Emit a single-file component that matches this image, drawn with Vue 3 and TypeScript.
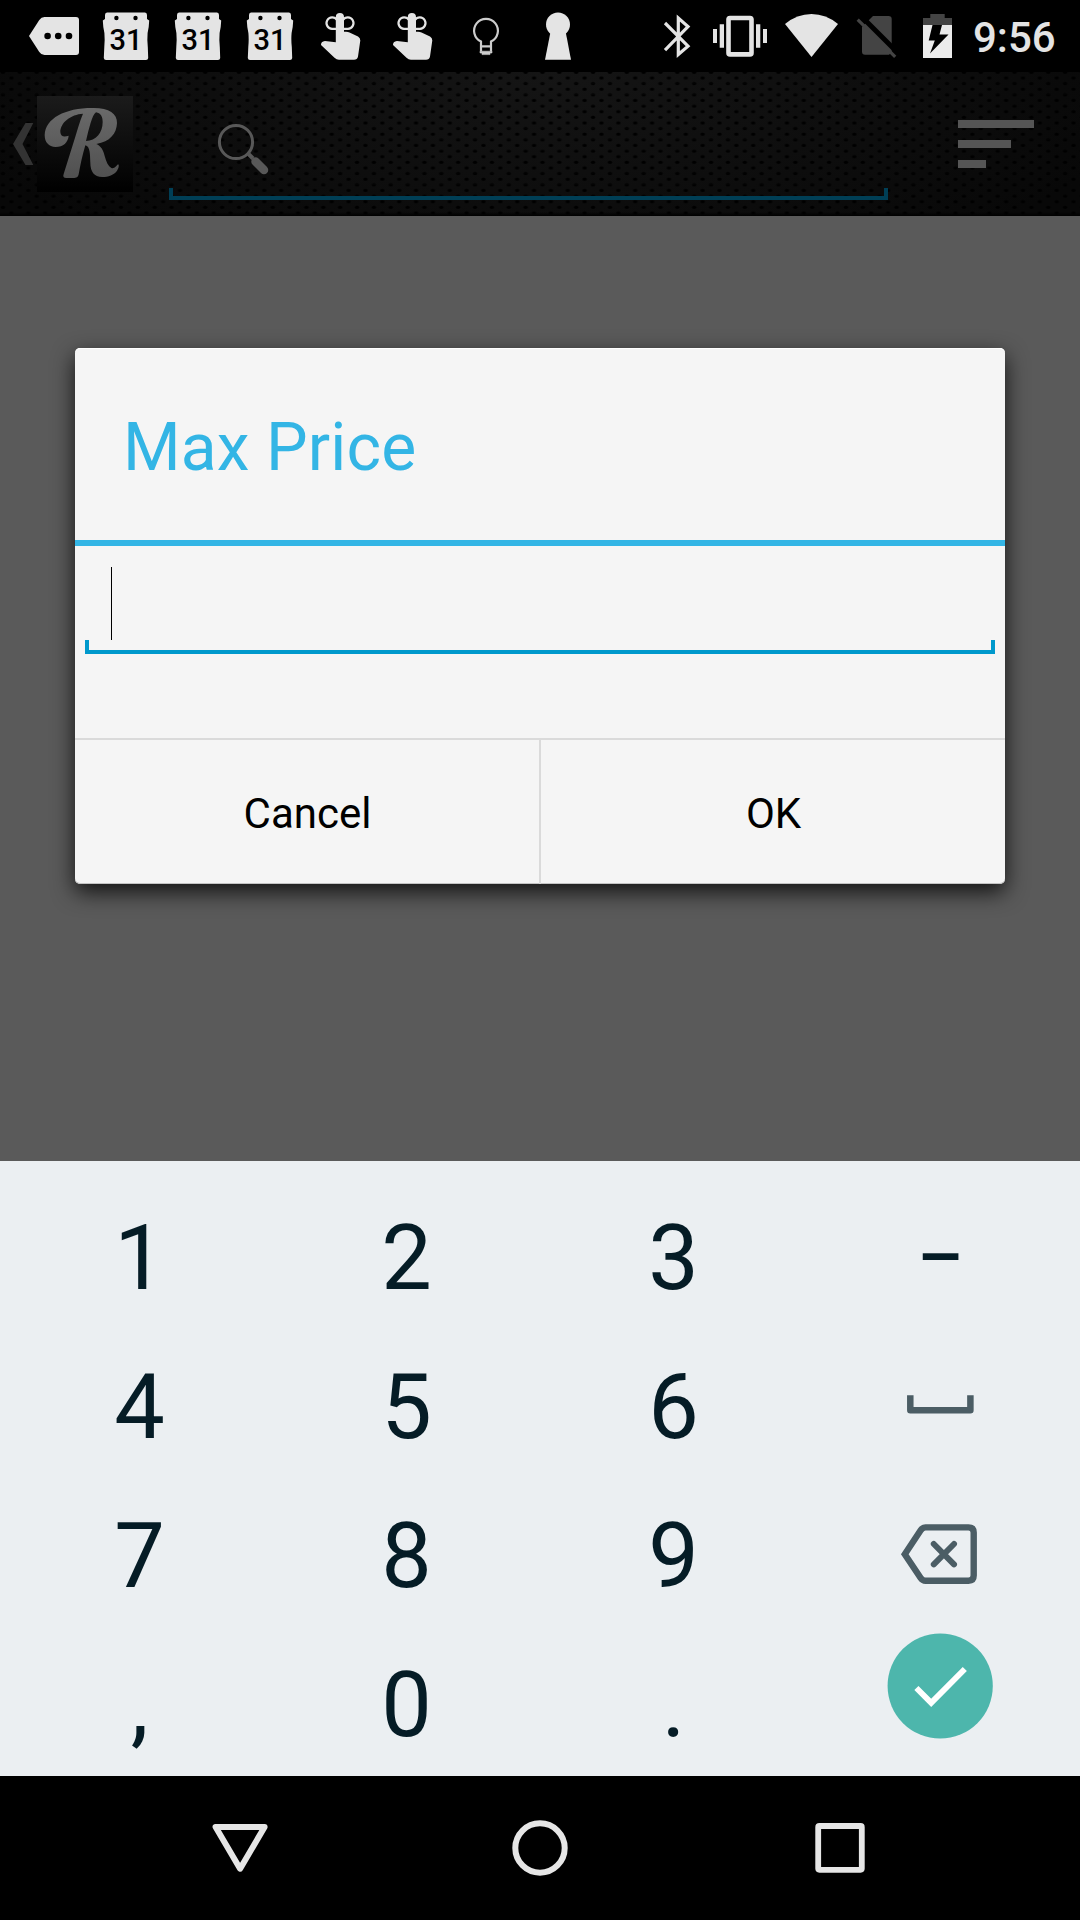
<script setup lang="ts">
interface Key {
  id: string
  label?: string
}

const keys: Key[] = [
  { id: '1', label: '1' },
  { id: '2', label: '2' },
  { id: '3', label: '3' },
  { id: 'minus', label: '–' },
  { id: '4', label: '4' },
  { id: '5', label: '5' },
  { id: '6', label: '6' },
  { id: 'space' },
  { id: '7', label: '7' },
  { id: '8', label: '8' },
  { id: '9', label: '9' },
  { id: 'delete' },
  { id: 'comma', label: ',' },
  { id: '0', label: '0' },
  { id: 'dot', label: '.' },
  { id: 'done' },
]

const calendars: number[] = [1, 2, 3]
const reminders: number[] = [1, 2]
</script>

<template>
  <div class="screen">
    <header class="status">
      <div class="notifications">
        <svg width="72" height="72" viewBox="18 0 72 72" fill="#e4e4e4">
          <path d="M29 36 39.3 20Q41.3 17 44.5 17H76Q79 17 79 20V52Q79 55 76 55H44.5Q41.3 55 39.3 52Z" />
          <g fill="#000">
            <circle cx="47.6" cy="36" r="3.3" />
            <circle cx="58.2" cy="36" r="3.3" />
            <circle cx="69" cy="36" r="3.3" />
          </g>
        </svg>
        <svg v-for="n in calendars" :key="'c' + n" width="72" height="72" viewBox="90 0 72 72" fill="#e4e4e4">
          <path d="M107 12.5H145Q147 12.5 147 15V19L149.2 20.5Q149 27 147.6 33Q147 40 147.8 47L148.2 58Q148 60 146 60H106Q104 60 103.8 58L104.3 47Q105 40 104.4 33Q103 27 102.8 20.5L105 19V15Q105 12.5 107 12.5Z" />
          <circle cx="116.4" cy="18" r="2.2" fill="#000" />
          <circle cx="135.5" cy="18" r="2.2" fill="#000" />
          <text x="126" y="50.3" text-anchor="middle" class="date">31</text>
        </svg>
        <svg v-for="n in reminders" :key="'r' + n" width="72" height="72" viewBox="306 0 72 72" fill="#e4e4e4">
          <path d="M335.8 17A4.1 4.1 0 0 1 344 17V31.7H346Q348 31.8 349.5 32.4L358 36.5Q360.4 38 360.3 40.5L358 56.5Q357.3 59.7 354 59.7H339Q336.5 59.7 334.5 57.8L321 45Q320.8 41.5 325 40.9L335.8 42.3Z" />
          <path d="M336 28.8H332A5.7 5.7 0 1 1 337 20M343.7 28.8H348A5.7 5.7 0 1 0 343 20" fill="none" stroke="#e4e4e4" stroke-width="2.2" />
        </svg>
        <svg width="72" height="72" viewBox="450 0 72 72" fill="none" stroke="#ccc" stroke-width="2.2">
          <path d="M481 51.5V41.5A11.9 11.9 0 1 1 491 41.5V51.5M480 46.3H492" />
          <path d="M480 51.2H492V53H490V54.6H482V53H480Z" fill="#ccc" stroke-width="0.6" />
        </svg>
        <svg width="72" height="72" viewBox="522 0 72 72" fill="#e4e4e4">
          <circle cx="558" cy="24.4" r="12" />
          <path d="M550.5 32H565.7L571 59.7H545Z" />
        </svg>
      </div>
      <div class="system">
        <svg width="60" height="72" viewBox="648 0 60 72" fill="none" stroke="#e4e4e4" stroke-width="3.2">
          <path d="M665 23 688 46.2 678.3 54.5V18L688 26.5 665 50.2" />
        </svg>
        <svg width="68" height="72" viewBox="708 0 68 72" fill="#e4e4e4">
          <rect x="728.5" y="18" width="23" height="36.4" rx="1.5" fill="none" stroke="#e4e4e4" stroke-width="4.6" />
          <path d="M713 29H717V43H713ZM719.7 24.3H724V47.7H719.7ZM756 24.3H760.3V47.7H756ZM763 29H767V43H763Z" />
        </svg>
        <svg width="72" height="72" viewBox="776 0 72 72" fill="#e4e4e4">
          <path d="M811.5 57 785 24Q797 14 811.5 14T838 24Z" />
        </svg>
        <svg width="60" height="72" viewBox="848 0 60 72">
          <path d="M873 16H888.5Q891.7 16 891.7 19V52L889 54.7H865Q862 54.7 862 51.7V27Z" fill="#444" />
          <path d="M860 15 900 55" stroke="#000" stroke-width="5" />
          <path d="M857.7 19.7 895.2 56.8" stroke="#444" stroke-width="3.2" />
        </svg>
        <svg width="65" height="72" viewBox="908 0 65 72">
          <path d="M930.3 14H944.7V18H952V26H923V18H930.3Z" fill="#444" />
          <path d="M923 25H952V58H923Z" fill="#ebebeb" />
          <path d="M932.5 25H942L939.5 34.6H948.5L930 53.5 934.8 40.5H928.7Z" fill="#000" />
        </svg>
        <span class="time">9:56</span>
      </div>
    </header>

    <div class="actionbar">
      <svg width="36" height="144" viewBox="0 72 36 144" fill="#333">
        <path d="M25.5 123H33.3L22.5 144 33.3 165H25.5L13 144Z" />
      </svg>
      <svg class="logo" width="96" height="96" viewBox="0 0 288 288">
        <defs>
          <linearGradient id="mark" x1="0" y1="36" x2="0" y2="246" gradientUnits="userSpaceOnUse">
            <stop offset="0" stop-color="#6a6a6a" />
            <stop offset="1" stop-color="#505050" />
          </linearGradient>
        </defs>
        <path
          fill="url(#mark)"
          fill-rule="evenodd"
          d="M95 119C93 139 79 153 56 153C35 152 23 139 23 117C25 67 84 36 166 36C215 35 241 52 240 81C239 113 219 137 178 144C192 150 199 163 203 180C208 199 214 211 223 216C233 219 237 210 243 205C247 206 246 216 240 224C232 236 213 243 196 243C171 243 160 226 160 200C159 177 160 151 145 148C136 178 130 207 125 235C123 244 119 246 108 246H88C80 246 77 242 80 234L114 125C121 102 128 77 138 53C101 55 70 80 70 108C71 122 81 124 95 119ZM177 49C165 57 156 98 147 135C177 134 197 111 197 78C197 62 191 51 177 49Z"
        />
      </svg>
      <div class="search">
        <svg width="60" height="60" viewBox="213 116 60 60" fill="none" stroke="#585858">
          <circle cx="236" cy="142" r="16.6" stroke-width="3" />
          <path d="M248.5 154 253 158.5" stroke-width="4" />
          <path d="M255.500 161.500 264 170" stroke-width="8.500" stroke-linecap="round" />
        </svg>
      </div>
      <div class="menu"><i></i><i></i><i></i></div>
    </div>

    <main class="content">
      <section class="dialog">
        <h1>Max Price</h1>
        <div class="body">
          <div class="field"><span class="caret"></span></div>
        </div>
        <div class="buttons">
          <button type="button">Cancel</button>
          <button type="button">OK</button>
        </div>
      </section>
    </main>

    <section class="keyboard">
      <div v-for="key in keys" :key="key.id" class="key" :class="key.id">
        <template v-if="key.label">{{ key.label }}</template>
        <svg v-else-if="key.id === 'space'" width="267" height="149" viewBox="807 1332 267 149">
          <path d="M910.3 1397.500V1409.300H970.400V1397.500" fill="none" stroke="#4b5d65" stroke-width="6.500" stroke-linejoin="round" stroke-linecap="square" />
        </svg>
        <svg v-else-if="key.id === 'delete'" width="267" height="149" viewBox="807 1482 267 149" fill="none" stroke="#4b5d65" stroke-width="6.400">
          <path d="M904.800 1554.300 920.500 1530.500Q922.500 1527.400 925.500 1527.400H968.500Q973.700 1527.400 973.700 1532.500V1575.500Q973.700 1580.700 968.500 1580.700H925.500Q922.500 1580.700 920.500 1577.700Z" />
          <path d="M933.800 1544 954 1564.300M954 1544 933.800 1564.300" stroke-linecap="round" stroke-width="6" />
        </svg>
        <svg v-else width="267" height="149" viewBox="807 1631 267 149">
          <circle cx="940.200" cy="1686" r="52.600" fill="#4db6ac" />
          <path d="M916.400 1688 931.200 1702.800 964.800 1669" fill="none" stroke="#fff" stroke-width="5.800" />
        </svg>
      </div>
    </section>

    <nav class="navbar">
      <svg width="60" height="60" viewBox="210 1818 60 60">
        <path d="M215.600 1826.900H264.600L240.100 1868.700Z" stroke-width="6" stroke-linejoin="round" />
      </svg>
      <svg width="60" height="60" viewBox="510 1818 60 60">
        <circle cx="540" cy="1848" r="24.700" stroke-width="6" />
      </svg>
      <svg width="60" height="60" viewBox="810 1818 60 60">
        <rect x="818.200" y="1826" width="43.600" height="43.800" rx="1.200" stroke-width="5.800" />
      </svg>
    </nav>
  </div>
</template>

<style>
body {
  margin: 0;
  background: #000;
}
</style>

<style scoped>
.screen {
  width: 1080px;
  height: 1920px;
  display: flex;
  flex-direction: column;
  overflow: hidden;
  font-family: Roboto, "Noto Sans", sans-serif;
}
svg {
  display: block;
  flex: none;
}
.status {
  height: 72px;
  flex: none;
  background: #000;
  display: flex;
  justify-content: space-between;
  padding: 0 24px 0 18px;
}
.notifications,
.system {
  display: flex;
}
.date {
  font: 500 29px Roboto, sans-serif;
  fill: #000;
}
.time {
  width: 83px;
  color: #e4e4e4;
  font-size: 42px;
  font-weight: 500;
  line-height: 75px;
  white-space: nowrap;
}
.actionbar {
  height: 144px;
  flex: none;
  box-sizing: border-box;
  display: flex;
  align-items: center;
  background-color: #0b0b0b;
  background-image:
    linear-gradient(transparent 140px, #000 144px),
    radial-gradient(ellipse 2.9px 2px at 11.4px 6px, #000 50%, transparent 100%),
    radial-gradient(ellipse 2.9px 2px at 2.97px 11.63px, #000 50%, transparent 100%),
    radial-gradient(ellipse 2.9px 2px at 2.97px 0.38px, #000 50%, transparent 100%),
    radial-gradient(ellipse 620px 220px at 50% 0, #151515, #080808);
  background-size: auto, 16.86px 11.25px, 16.86px 11.25px, 16.86px 11.25px, auto;
}
.logo {
  margin-left: 1px;
  background: linear-gradient(#1b1b1b, #000);
}
.search {
  position: relative;
  width: 719px;
  height: 112px;
  margin: 0 70px 0 36px;
  box-sizing: border-box;
  padding: 28px 0 0 44px;
  border-bottom: 4px solid #003f56;
}
.search::before,
.search::after {
  content: "";
  position: absolute;
  bottom: 0;
  width: 4px;
  height: 8px;
  background: #003f56;
}
.search::before {
  left: 0;
}
.search::after {
  right: 0;
}
.menu {
  display: flex;
  flex-direction: column;
  gap: 12px;
}
.menu i {
  width: 76px;
  height: 8px;
  background: #555;
}
.menu i:nth-child(2) {
  width: 53px;
}
.menu i:nth-child(3) {
  width: 28px;
}
.content {
  height: 945px;
  flex: none;
  box-sizing: border-box;
  padding: 132px 75px 0;
  background: #5a5a5a;
}
.dialog {
  height: 536px;
  display: flex;
  flex-direction: column;
  border-radius: 5px;
  background: #f5f5f5;
  box-shadow: 0 8px 22px rgba(0, 0, 0, 0.8), inset 0 1px 0 #fff, inset 0 -1px 0 #c4c4c4;
}
h1 {
  margin: 0;
  height: 192px;
  padding-left: 48px;
  border-bottom: 6px solid #33b5e5;
  color: #33b5e5;
  font-size: 66px;
  font-weight: 400;
  line-height: 199px;
  letter-spacing: 0.12px;
}
.body {
  height: 192px;
  box-sizing: border-box;
  padding: 0 10px;
}
.field {
  position: relative;
  height: 108px;
  box-sizing: border-box;
  padding: 21px 0 0 26px;
  border-bottom: 4px solid #0099cc;
}
.field::before,
.field::after {
  content: "";
  position: absolute;
  bottom: 0;
  width: 4px;
  height: 10px;
  background: #0099cc;
}
.field::before {
  left: 0;
}
.field::after {
  right: 0;
}
.caret {
  display: block;
  width: 1px;
  height: 73px;
  background: #000;
}
.buttons {
  flex: 1;
  display: flex;
  border-top: 2px solid #dadada;
}
button {
  flex: 1;
  margin: 0;
  padding: 2px 0 0 1px;
  border: 0;
  background: none;
  font-family: inherit;
  font-size: 42px;
  color: #000;
}
button:first-child {
  border-right: 2px solid #dadada;
}
.keyboard {
  height: 615px;
  flex: none;
  box-sizing: border-box;
  padding: 23px 6px 0;
  display: grid;
  grid-template-columns: repeat(4, 267px);
  grid-template-rows: repeat(4, 149px);
  overflow: hidden;
  background: #ebeff2;
}
.key {
  text-align: center;
  font-size: 90px;
  line-height: 149px;
  color: #051c26;
}
.minus {
  transform: translateX(0.5px) scaleX(0.81);
}
.navbar {
  height: 144px;
  flex: none;
  display: flex;
  align-items: center;
  justify-content: center;
  gap: 240px;
  background: #000;
}
.navbar svg {
  fill: none;
  stroke: #e6e6e6;
}
</style>
